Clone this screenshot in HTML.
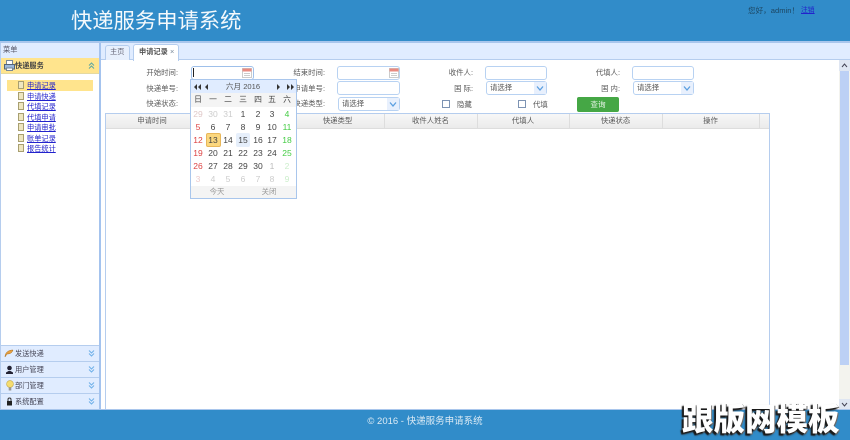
<!DOCTYPE html>
<html lang="zh"><head><meta charset="utf-8"><title>快递服务申请系统</title>
<style>
*{box-sizing:border-box}
html,body{margin:0;padding:0;width:850px;height:440px;overflow:hidden;background:#fff}
body{position:relative;font-family:"Liberation Sans","Noto Sans CJK SC",sans-serif;font-size:7.4px;color:#5a5a5a}
.a{position:absolute}
.t{position:absolute;white-space:nowrap;line-height:12px;height:12px}
.r{text-align:right}
.c{text-align:center}
.inp{position:absolute;border:1px solid #b8d2f2;border-radius:3px;background:#fff;height:14px}
.sel{position:absolute;border:1px solid #b8d2f2;border-radius:3px;background:#fff;height:14px;line-height:12px;padding-left:3px;color:#555}
.sel i{position:absolute;right:0;top:0;width:12px;height:12px;background:#e8f0fd}
.sel svg{position:absolute;right:2px;top:3px}
.it{position:absolute;left:27px;color:#22c;text-decoration:underline;line-height:11px;height:11px;white-space:nowrap;font-size:7.2px}
.ic{position:absolute;left:18px;width:6px;height:8px;background:#eee6c0;border:1px solid #a89f70}
.d{position:absolute;width:14px;text-align:center;font-size:8.5px;line-height:12px;height:12px;color:#444}
.h{position:absolute;width:1px;top:114px;height:15px;background:#ddd}
</style></head><body>

<div class="a" style="left:0;top:0;width:850px;height:41px;background:#318cc9"></div>
<div class="a" style="left:0;top:41px;width:850px;height:2px;background:#a9c6ec"></div>
<div class="t" style="left:71px;top:6px;height:30px;line-height:30px;font-size:21.3px;color:#f4f9fc">快递服务申请系统</div>
<div class="t" style="left:748px;top:5px;color:#1d4763;font-size:7.6px">您好，admin！</div>
<div class="t" style="left:801px;top:5px;color:#22c;font-size:6.8px;text-decoration:underline">注销</div>

<!-- left -->
<div class="a" style="left:0;top:43px;width:101px;height:366px;background:#fff;border-right:2px solid #a4c3ee;border-left:1px solid #b5cdee"></div>
<div class="a" style="left:1px;top:43px;width:98px;height:15px;background:#e0ecff"></div>
<div class="t" style="left:3px;top:44px;color:#556;font-size:7.2px">菜单</div>
<div class="a" style="left:1px;top:58px;width:98px;height:16px;background:#ffe48d;border-bottom:1px solid #e5d9a0"></div>
<svg class="a" style="left:4px;top:60px" width="11" height="11" viewBox="0 0 11 11"><rect x="2.5" y="0.5" width="6" height="5" fill="#fff" stroke="#789"/><rect x="0.5" y="4.5" width="10" height="4.5" fill="#9bb8dc" stroke="#567"/><rect x="2.5" y="8" width="6" height="2.5" fill="#fff" stroke="#789"/></svg>
<div class="t" style="left:15px;top:60px;color:#444;font-weight:bold;font-size:7.2px">快递服务</div>
<svg class="a" style="left:88px;top:62px" width="7" height="7" viewBox="0 0 7 7"><path d="M1 3.5L3.5 1L6 3.5M1 6.5L3.5 4L6 6.5" fill="none" stroke="#5fa7a0" stroke-width="1"/></svg>
<div class="a" style="left:7px;top:80px;width:86px;height:11px;background:#ffe48d"></div>

<div class="ic" style="top:81px"></div><div class="it" style="top:80px">申请记录</div>
<div class="ic" style="top:92px"></div><div class="it" style="top:91px">申请快递</div>
<div class="ic" style="top:102px"></div><div class="it" style="top:101px">代填记录</div>
<div class="ic" style="top:113px"></div><div class="it" style="top:112px">代填申请</div>
<div class="ic" style="top:123px"></div><div class="it" style="top:122px">申请审批</div>
<div class="ic" style="top:134px"></div><div class="it" style="top:133px">账单记录</div>
<div class="ic" style="top:144px"></div><div class="it" style="top:143px">报告统计</div>

<div class="a" style="left:1px;top:345px;width:98px;height:64px;background:#e0ecff"></div>
<div class="a" style="left:1px;top:345px;width:98px;height:1px;background:#b5cdee"></div>
<div class="a" style="left:1px;top:361px;width:98px;height:1px;background:#b5cdee"></div>
<div class="a" style="left:1px;top:377px;width:98px;height:1px;background:#b5cdee"></div>
<div class="a" style="left:1px;top:393px;width:98px;height:1px;background:#b5cdee"></div>
<svg class="a" style="left:4px;top:348px" width="10" height="11" viewBox="0 0 10 11"><path d="M1 9C1 5 4 2 9 2C8 5 6 6 3 6L1 9Z" fill="#e8a040" stroke="#a87020" stroke-width=".5"/></svg>
<svg class="a" style="left:5px;top:365px" width="9" height="10" viewBox="0 0 9 10"><circle cx="4.5" cy="3" r="2.3" fill="#223"/><path d="M1 9h7V7.5L5.5 6h-2L1 7.5Z" fill="#223"/></svg>
<svg class="a" style="left:6px;top:380px" width="8" height="12" viewBox="0 0 8 12"><circle cx="4" cy="4" r="3.4" fill="#f5dd70" stroke="#c6a840" stroke-width=".6"/><rect x="2.7" y="7.5" width="2.6" height="3" fill="#999"/></svg>
<svg class="a" style="left:6px;top:397px" width="7" height="9" viewBox="0 0 7 9"><path d="M2 4V2.5a1.5 1.5 0 0 1 3 0V4" fill="none" stroke="#333"/><rect x="1" y="4" width="5" height="4.5" fill="#222"/></svg>
<div class="t" style="left:15px;top:348px;color:#445;font-size:7.2px">发送快递</div>
<div class="t" style="left:15px;top:364px;color:#445;font-size:7.2px">用户管理</div>
<div class="t" style="left:15px;top:380px;color:#445;font-size:7.2px">部门管理</div>
<div class="t" style="left:15px;top:396px;color:#445;font-size:7.2px">系统配置</div>
<svg class="a" style="left:88px;top:350px" width="7" height="7" viewBox="0 0 7 7"><path d="M1 .5L3.5 3L6 .5M1 3.5L3.5 6L6 3.5" fill="none" stroke="#6fb0e8"/></svg>
<svg class="a" style="left:88px;top:366px" width="7" height="7" viewBox="0 0 7 7"><path d="M1 .5L3.5 3L6 .5M1 3.5L3.5 6L6 3.5" fill="none" stroke="#6fb0e8"/></svg>
<svg class="a" style="left:88px;top:382px" width="7" height="7" viewBox="0 0 7 7"><path d="M1 .5L3.5 3L6 .5M1 3.5L3.5 6L6 3.5" fill="none" stroke="#6fb0e8"/></svg>
<svg class="a" style="left:88px;top:398px" width="7" height="7" viewBox="0 0 7 7"><path d="M1 .5L3.5 3L6 .5M1 3.5L3.5 6L6 3.5" fill="none" stroke="#6fb0e8"/></svg>

<!-- tabs -->
<div class="a" style="left:101px;top:43px;width:749px;height:17px;background:#e0ecff;border-bottom:1px solid #b5cdee"></div>
<div class="a" style="left:105px;top:45px;width:25px;height:15px;background:#e8f0fd;border:1px solid #b5cdee;border-bottom:0;border-radius:3px 3px 0 0"></div>
<div class="t" style="left:110px;top:46px;color:#667;font-size:7.2px">主页</div>
<div class="a" style="left:133px;top:44px;width:46px;height:17px;background:#fff;border:1px solid #b5cdee;border-bottom:0;border-radius:3px 3px 0 0"></div>
<div class="t" style="left:139px;top:46px;color:#555;font-weight:bold;font-size:7.2px">申请记录</div>
<div class="t" style="left:170px;top:46px;color:#789">×</div>

<!-- form labels -->
<div class="t r" style="left:120px;top:67px;width:58px">开始时间:</div>
<div class="t r" style="left:120px;top:83px;width:58px">快递单号:</div>
<div class="t r" style="left:120px;top:98px;width:58px">快递状态:</div>
<div class="t r" style="left:266px;top:67px;width:59px">结束时间:</div>
<div class="t r" style="left:266px;top:83px;width:59px">申请单号:</div>
<div class="t r" style="left:266px;top:98px;width:59px">快递类型:</div>
<div class="t r" style="left:420px;top:67px;width:53px">收件人:</div>
<div class="t r" style="left:420px;top:83px;width:53px">国 际:</div>
<div class="t r" style="left:566px;top:67px;width:54px">代填人:</div>
<div class="t r" style="left:566px;top:83px;width:54px">国 内:</div>

<!-- inputs -->
<div class="inp" style="left:191px;top:66px;width:63px;border-color:#9fc0ea"></div>
<div class="a" style="left:193px;top:68px;width:1px;height:9px;background:#222"></div>
<div class="inp" style="left:337px;top:66px;width:63px"></div>
<div class="inp" style="left:337px;top:81px;width:63px"></div>
<div class="inp" style="left:485px;top:66px;width:62px"></div>
<div class="inp" style="left:632px;top:66px;width:62px"></div>
<svg class="a" style="left:242px;top:67px" width="10" height="11" viewBox="0 0 10 11"><rect x=".5" y="1.5" width="9" height="9" fill="#fff" stroke="#ccc"/><rect x=".5" y="1.5" width="9" height="3" fill="#e98a80"/><path d="M2 6.5h6M2 8.5h6" stroke="#ccc"/></svg>
<svg class="a" style="left:389px;top:67px" width="10" height="11" viewBox="0 0 10 11"><rect x=".5" y="1.5" width="9" height="9" fill="#fff" stroke="#ccc"/><rect x=".5" y="1.5" width="9" height="3" fill="#e98a80"/><path d="M2 6.5h6M2 8.5h6" stroke="#ccc"/></svg>

<div class="sel" style="left:338px;top:97px;width:62px">请选择<i></i><svg width="8" height="7" viewBox="0 0 8 7"><path d="M1 1.5L4 5L7 1.5" fill="none" stroke="#5b9fe0" stroke-width="1.3"/></svg></div>
<div class="sel" style="left:486px;top:81px;width:61px">请选择<i></i><svg width="8" height="7" viewBox="0 0 8 7"><path d="M1 1.5L4 5L7 1.5" fill="none" stroke="#5b9fe0" stroke-width="1.3"/></svg></div>
<div class="sel" style="left:633px;top:81px;width:61px">请选择<i></i><svg width="8" height="7" viewBox="0 0 8 7"><path d="M1 1.5L4 5L7 1.5" fill="none" stroke="#5b9fe0" stroke-width="1.3"/></svg></div>

<div class="a" style="left:442px;top:100px;width:8px;height:8px;border:1px solid #7d93b3;background:#fff"></div>
<div class="t" style="left:457px;top:99px">隐藏</div>
<div class="a" style="left:518px;top:100px;width:8px;height:8px;border:1px solid #7d93b3;background:#fff"></div>
<div class="t" style="left:533px;top:99px">代填</div>
<div class="a c" style="left:577px;top:97px;width:42px;height:15px;background:#45a745;border-radius:2px;color:#e8f5e8;line-height:15px;font-size:7.6px">查询</div>

<!-- grid -->
<div class="a" style="left:105px;top:113px;width:665px;height:296px;background:#fff;border:1px solid #b5cdee;border-bottom:0"></div>
<div class="a" style="left:106px;top:114px;width:663px;height:15px;background:linear-gradient(#f7f7f7,#ebebeb);border-bottom:1px solid #ddd"></div>
<div class="h" style="left:198px"></div><div class="h" style="left:291px"></div><div class="h" style="left:384px"></div><div class="h" style="left:477px"></div><div class="h" style="left:569px"></div><div class="h" style="left:662px"></div><div class="h" style="left:759px"></div>
<div class="t c" style="left:106px;top:115px;width:92px">申请时间</div>
<div class="t c" style="left:291px;top:115px;width:93px">快递类型</div>
<div class="t c" style="left:384px;top:115px;width:93px">收件人姓名</div>
<div class="t c" style="left:477px;top:115px;width:92px">代填人</div>
<div class="t c" style="left:569px;top:115px;width:93px">快递状态</div>
<div class="t c" style="left:662px;top:115px;width:97px">操作</div>

<!-- calendar -->
<div class="a" style="left:190px;top:79px;width:107px;height:120px;background:#fff;border:1px solid #a9c6ec"></div>
<div class="a" style="left:191px;top:80px;width:105px;height:13px;background:#e0ecff"></div>
<div class="a" style="left:191px;top:93px;width:105px;height:14px;background:#f4f4f4"></div>
<div class="a" style="left:191px;top:186px;width:105px;height:12px;background:#f4f4f4"></div>
<div class="t c" style="left:216px;top:81px;width:54px;color:#555;font-size:7.6px">六月 2016</div>
<svg class="a" style="left:194px;top:84px" width="22" height="6" viewBox="0 0 22 6"><path d="M3 0L0 3L3 6ZM7 0L4 3L7 6ZM14 0L11 3L14 6Z" fill="#333"/></svg>
<svg class="a" style="left:277px;top:84px" width="17" height="6" viewBox="0 0 17 6"><path d="M0 0L3 3L0 6ZM10 0L13 3L10 6ZM14 0L17 3L14 6Z" fill="#333"/></svg>
<div class="a" style="left:206px;top:133px;width:15px;height:14px;background:#fbd77e;border:1px solid #e8b75a;border-radius:2px"></div>
<div class="a" style="left:236px;top:133px;width:14px;height:14px;background:#e6effb;border-radius:2px"></div>
<div class="d" style="left:191px;top:94px;font-size:7.8px">日</div><div class="d" style="left:206px;top:94px;font-size:7.8px">一</div><div class="d" style="left:221px;top:94px;font-size:7.8px">二</div><div class="d" style="left:236px;top:94px;font-size:7.8px">三</div><div class="d" style="left:251px;top:94px;font-size:7.8px">四</div><div class="d" style="left:265px;top:94px;font-size:7.8px">五</div><div class="d" style="left:280px;top:94px;font-size:7.8px">六</div>

<div class="d" style="left:191px;top:108px;color:#e0c8c8">29</div><div class="d" style="left:206px;top:108px;color:#ccc">30</div><div class="d" style="left:221px;top:108px;color:#ccc">31</div><div class="d" style="left:236px;top:108px">1</div><div class="d" style="left:251px;top:108px">2</div><div class="d" style="left:265px;top:108px">3</div><div class="d" style="left:280px;top:108px;color:#4c4">4</div>
<div class="d" style="left:191px;top:121px;color:#d44">5</div><div class="d" style="left:206px;top:121px">6</div><div class="d" style="left:221px;top:121px">7</div><div class="d" style="left:236px;top:121px">8</div><div class="d" style="left:251px;top:121px">9</div><div class="d" style="left:265px;top:121px">10</div><div class="d" style="left:280px;top:121px;color:#4c4">11</div>
<div class="d" style="left:191px;top:134px;color:#d44">12</div><div class="d" style="left:206px;top:134px">13</div><div class="d" style="left:221px;top:134px">14</div><div class="d" style="left:236px;top:134px">15</div><div class="d" style="left:251px;top:134px">16</div><div class="d" style="left:265px;top:134px">17</div><div class="d" style="left:280px;top:134px;color:#4c4">18</div>
<div class="d" style="left:191px;top:147px;color:#d44">19</div><div class="d" style="left:206px;top:147px">20</div><div class="d" style="left:221px;top:147px">21</div><div class="d" style="left:236px;top:147px">22</div><div class="d" style="left:251px;top:147px">23</div><div class="d" style="left:265px;top:147px">24</div><div class="d" style="left:280px;top:147px;color:#4c4">25</div>
<div class="d" style="left:191px;top:160px;color:#d44">26</div><div class="d" style="left:206px;top:160px">27</div><div class="d" style="left:221px;top:160px">28</div><div class="d" style="left:236px;top:160px">29</div><div class="d" style="left:251px;top:160px">30</div><div class="d" style="left:265px;top:160px;color:#bbb">1</div><div class="d" style="left:280px;top:160px;color:#cec">2</div>
<div class="d" style="left:191px;top:173px;color:#ecc">3</div><div class="d" style="left:206px;top:173px;color:#ccc">4</div><div class="d" style="left:221px;top:173px;color:#ccc">5</div><div class="d" style="left:236px;top:173px;color:#ccc">6</div><div class="d" style="left:251px;top:173px;color:#ccc">7</div><div class="d" style="left:265px;top:173px;color:#ccc">8</div><div class="d" style="left:280px;top:173px;color:#cec">9</div>
<div class="t c" style="left:191px;top:186px;width:52px;color:#999">今天</div>
<div class="t c" style="left:243px;top:186px;width:52px;color:#999">关闭</div>

<!-- scrollbar -->
<div class="a" style="left:839px;top:60px;width:11px;height:349px;background:#f3f3ee"></div>
<div class="a" style="left:839px;top:60px;width:11px;height:11px;background:#dfe6f2"></div>
<div class="a" style="left:840px;top:71px;width:9px;height:294px;background:#bcd0f5"></div>
<div class="a" style="left:839px;top:399px;width:11px;height:10px;background:#dfe6f2"></div>
<svg class="a" style="left:841px;top:63px" width="7" height="5" viewBox="0 0 7 5"><path d="M1 4L3.5 1L6 4" fill="none" stroke="#445"/></svg>
<svg class="a" style="left:841px;top:402px" width="7" height="5" viewBox="0 0 7 5"><path d="M1 1L3.5 4L6 1" fill="none" stroke="#445"/></svg>

<!-- footer -->
<div class="a" style="left:0;top:409px;width:850px;height:31px;background:#318cc9;border-top:1px solid #a9c6ec"></div>
<div class="t c" style="left:0;top:416px;width:850px;color:#dcebf5;font-size:9.5px">© 2016 - 快递服务申请系统</div>
<div class="t" style="left:682px;top:399px;height:36px;line-height:36px;font-size:31.5px;font-weight:900;color:#fff;font-family:'Noto Sans CJK SC','WenQuanYi Zen Hei',sans-serif;text-shadow:-2px 2px 1px #1a1a1a,-1px 2px 2px #333,1px 1px 0 #777">跟版网模板</div>
</body></html>
